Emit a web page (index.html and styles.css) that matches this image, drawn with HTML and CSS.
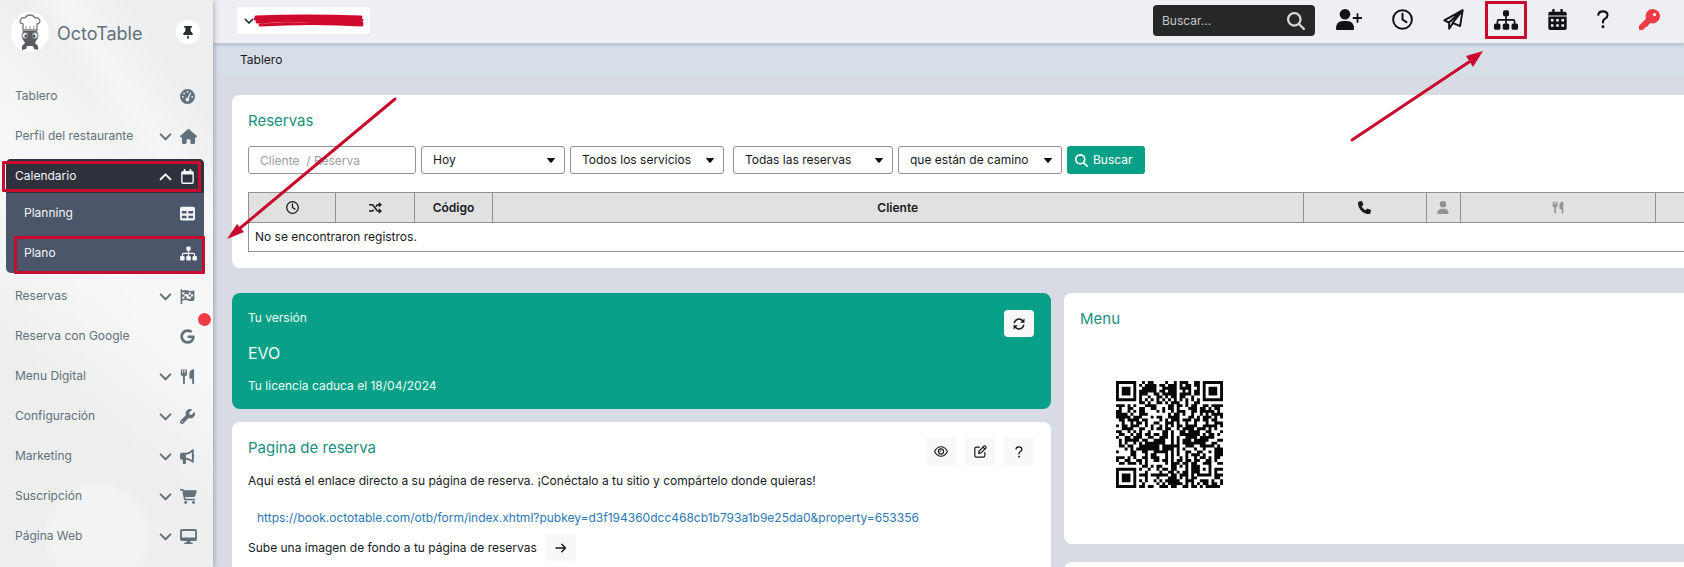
FILE: index.html
```
<!DOCTYPE html>
<html lang="es">
<head>
  <meta charset="UTF-8" />
  <meta name="viewport" content="width=device-width, initial-scale=1.0" />
  <title>OctoTable - Tablero</title>
  <link rel="stylesheet" href="styles.css">
</head>
<body>
  <svg class="sprite" aria-hidden="true">
    <symbol id="i-down" viewBox="0 0 24 24"><path d="M3 8l9 9 9-9" fill="none" stroke="currentColor" stroke-width="3.6" stroke-linecap="round" stroke-linejoin="round"/></symbol>
    <symbol id="i-up" viewBox="0 0 24 24"><path d="M3 17l9-9 9 9" fill="none" stroke="currentColor" stroke-width="3.6" stroke-linecap="round" stroke-linejoin="round"/></symbol>
    <symbol id="i-pin" viewBox="0 0 384 512"><path d="M32 32C32 14.3 46.3 0 64 0H320c17.7 0 32 14.3 32 32s-14.3 32-32 32H290.5l11.4 148.2c36.7 19.9 65.7 53.2 79.5 94.7l1 3c3.3 9.8 1.6 20.5-4.4 28.8s-15.7 13.3-26 13.3H32c-10.3 0-19.9-4.9-26-13.3s-7.7-19.1-4.4-28.8l1-3c13.8-41.5 42.8-74.8 79.5-94.7L93.5 64H64C46.3 64 32 49.7 32 32zM160 384h64v96c0 17.7-14.3 32-32 32s-32-14.3-32-32V384z"/></symbol>
    <symbol id="i-gauge" viewBox="0 0 24 24"><path fill-rule="evenodd" d="M12 0a12 12 0 1 1 0 24a12 12 0 0 1 0-24zM12 3a1.500 1.500 0 1 0 0 3a1.500 1.500 0 0 0 0-3zM6.500 5.500a1.500 1.500 0 1 0 0 3a1.500 1.500 0 0 0 0-3zM4.500 11a1.500 1.500 0 1 0 0 3a1.500 1.500 0 0 0 0-3zM19.500 11a1.500 1.500 0 1 0 0 3a1.500 1.500 0 0 0 0-3zM16.200 5.500l-4 8.300a3 3 0 1 0 1.900 .900l3.900-8.200z"/></symbol>
    <symbol id="i-home" viewBox="0 0 576 512"><path d="M575.8 255.5c0 18-15 32.1-32 32.1h-32l.7 160.2c0 2.700-.2 5.400-.5 8.100V472c0 22.100-17.900 40-40 40H392c-22.100 0-40-17.900-40-40V384c0-17.700-14.300-32-32-32H256c-17.700 0-32 14.300-32 32v88c0 22.100-17.900 40-40 40H104c-22.100 0-40-17.900-40-40V287.600H32c-18 0-32-14-32-32.100c0-9 3-17 10-24L266.400 8c7-7 15-8 22-8s15 2 21 7L564.800 231.500c8 7 12 15 11 24z"/></symbol>
    <symbol id="i-cal" viewBox="0 0 24 26"><path fill-rule="evenodd" d="M5.500 0h3v3.500h7V0h3v3.500H20a3 3 0 0 1 3 3V23a3 3 0 0 1-3 3H4a3 3 0 0 1-3-3V6.500a3 3 0 0 1 3-3h1.500zM3.500 9.500V23.500h17V9.500z"/></symbol>
    <symbol id="i-table" viewBox="0 0 24 22"><path fill-rule="evenodd" d="M3 0h18a3 3 0 0 1 3 3v16a3 3 0 0 1-3 3H3a3 3 0 0 1-3-3V3a3 3 0 0 1 3-3zM3 7v4h7.500V7zM13.500 7v4H21V7zM3 14.500v4h7.500v-4zM13.500 14.500v4H21v-4z"/></symbol>
    <symbol id="i-sitemap" viewBox="0 0 28 23"><rect x="10.500" y="0" width="7" height="7" rx="1.800"/><rect x="0" y="15.500" width="7.500" height="7.500" rx="2"/><rect x="10.250" y="15.500" width="7.500" height="7.500" rx="2"/><rect x="20.500" y="15.500" width="7.500" height="7.500" rx="2"/><path d="M14 6v10M4 16v-3q0-1.700 1.700-1.700h16.600q1.700 0 1.700 1.700v3" fill="none" stroke="currentColor" stroke-width="2"/></symbol>
    <symbol id="i-flag" viewBox="0 0 24 24"><path fill-rule="evenodd" d="M1 1q1.300-2 2.600 0v1.500q5-2 9.400 0t10-.5V18q-5 2.500-10 .5t-9.400 0V24H1zM7 4.500l-3.400 1V9L7 8.300v3.500l3.500-.4V7.900L7 8.300zM14 5v3.600l-3.500-.7v3.500l3.500 .700v3.400l3.500 .300v-3.500L14 12.100V8.600l3.500 .300V5.600zM17.500 8.900v3.400l3.500-.6V8.200zM3.600 12.500V16L7 15.300v-3.500zM10.500 11.400v3.700L14 15.500v-3.400z"/></symbol>
    <symbol id="i-google" viewBox="0 0 488 512"><path d="M488 261.800C488 403.300 391.100 504 248 504 110.800 504 0 393.200 0 256S110.800 8 248 8c66.800 0 123 24.500 166.300 64.900l-67.500 64.900C258.500 52.600 94.300 116.600 94.300 256c0 86.500 69.100 156.600 153.700 156.600 98.200 0 135-70.400 140.800-106.900H248v-85.300h236.100c2.300 12.700 3.900 24.900 3.900 41.400z"/></symbol>
    <symbol id="i-fork" viewBox="0 0 24 24"><path d="M2 0q1-.6 1.500 0L4 7h.8L5.300 .3q.9-.6 1.700 0L7.500 7h.8L9 0q.6-.6 1.500 0l1 7.500q0 3.500-3.700 4.500v11q-1.500 2-3 0V12Q1 11 1 7.500zM22.500 0v23q-1.500 2-3 0v-7.500h-2.300q-2.200 0-2.200-2.500V7.500Q15.500 1 22.500 0z"/></symbol>
    <symbol id="i-wrench" viewBox="0 0 512 512"><path d="M352 320c88.400 0 160-71.600 160-160c0-15.300-2.200-30.100-6.200-44.200c-3.100-10.800-16.400-13.200-24.300-5.300l-76.800 76.800c-3 3-7.100 4.700-11.300 4.700H336c-8.800 0-16-7.200-16-16V118.600c0-4.200 1.700-8.300 4.700-11.300l76.800-76.800c7.900-7.900 5.400-21.200-5.300-24.300C382.100 2.200 367.300 0 352 0C263.600 0 192 71.600 192 160c0 19.100 3.400 37.500 9.500 54.500L19.900 396.100C7.200 408.800 0 426.100 0 444.100C0 481.600 30.400 512 67.900 512c18 0 35.300-7.200 48-19.900L297.500 310.500c17 6.200 35.400 9.500 54.500 9.500zM80 408a24 24 0 1 1 0 48 24 24 0 1 1 0-48z"/></symbol>
    <symbol id="i-horn" viewBox="0 0 24 24"><path fill-rule="evenodd" d="M22 1v8q2 1.500 0 4v8q-1 1.500-2.500 .500Q15 17.500 9.500 17v5.500q0 1.500-1.500 1.500H6q-1.500 0-1.500-1.500V17H3q-3 0-3-3V9q0-3 3-3h6q6 0 10.500-5.500Q21 0 22 1zM19 5Q15 8.500 9.500 9v5q5.500 .500 9.500 3.500z"/></symbol>
    <symbol id="i-cart" viewBox="0 0 27 24"><path d="M0 0h4.500q1 0 1.300 1.200L6 2h21l-2.700 9q-.5 1.800-2.300 1.800H8.200l.5 2.700H24V18H7.500q-1 0-1.300-1.200L3.600 2.500H0z"/><circle cx="9" cy="21.500" r="2.300"/><circle cx="21.500" cy="21.500" r="2.300"/></symbol>
    <symbol id="i-screen" viewBox="0 0 27 24"><path fill-rule="evenodd" d="M3 0h21a3 3 0 0 1 3 3v13a3 3 0 0 1-3 3h-8l.8 2.500h3q1.500 1.200 0 2.500H7.200q-1.500-1.200 0-2.500h3L11 19H3a3 3 0 0 1-3-3V3a3 3 0 0 1 3-3zM3 3v10.500h21V3z"/></symbol>
    <symbol id="i-search" viewBox="0 0 512 512"><path d="M416 208c0 45.900-14.900 88.300-40 122.700L502.600 457.400c12.500 12.500 12.500 32.800 0 45.300s-32.800 12.500-45.300 0L330.700 376c-34.400 25.200-76.800 40-122.700 40C93.100 416 0 322.900 0 208S93.100 0 208 0S416 93.100 416 208zM208 352a144 144 0 1 0 0-288 144 144 0 1 0 0 288z"/></symbol>
    <symbol id="i-user" viewBox="0 0 448 512"><path d="M224 256A128 128 0 1 0 224 0a128 128 0 1 0 0 256zm-45.700 48C79.800 304 0 383.800 0 482.300C0 498.700 13.300 512 29.700 512H418.300c16.400 0 29.700-13.300 29.700-29.700C448 383.800 368.200 304 269.700 304H178.300z"/></symbol>
    <symbol id="i-useradd" viewBox="0 0 26 21"><circle cx="9" cy="5.300" r="5.300"/><path d="M0 20q0-8 7-8h4q7 0 7 8 0 1-1 1H1q-1 0-1-1z"/><path d="M17.500 9h8M21.500 5v8" stroke="currentColor" stroke-width="1.800" stroke-linecap="round"/></symbol>
    <symbol id="i-clock" viewBox="0 0 24 24"><circle cx="12" cy="12" r="10.700" fill="none" stroke="currentColor" stroke-width="2.300"/><path d="M12 5.500V12l4.500 3" fill="none" stroke="currentColor" stroke-width="2.300" stroke-linecap="round" stroke-linejoin="round"/></symbol>
    <symbol id="i-plane" viewBox="0 0 24 24"><path d="M22.500 1.200L1.500 13l5.300 2.500L22.500 1.200 19.500 19.500l-8.500-3.700L22.500 1.200M7 15.500v7l4-6" fill="none" stroke="currentColor" stroke-width="2.200" stroke-linejoin="round"/></symbol>
    <symbol id="i-days" viewBox="0 0 21 24"><path fill-rule="evenodd" d="M4.500 0h2.700v3h6.600V0h2.700v3H19a2 2 0 0 1 2 2v2.300H0V5a2 2 0 0 1 2-2h2.500zM0 8.700h21V22a2 2 0 0 1-2 2H2a2 2 0 0 1-2-2zM3 11.500v2.700h3v-2.700zM9 11.500v2.700h3v-2.700zM15 11.500v2.700h3v-2.700zM3 17.500v2.700h3v-2.700zM9 17.500v2.700h3v-2.700zM15 17.500v2.700h3v-2.700z"/></symbol>
    <symbol id="i-help" viewBox="0 0 14 22"><path d="M1.500 5.500Q2 1.500 7 1.500t5.300 4.300Q12.300 8.500 9.500 10T7 14.500" fill="none" stroke="currentColor" stroke-width="2.400" stroke-linecap="round"/><circle cx="7" cy="19.500" r="1.700"/></symbol>
    <symbol id="i-key" viewBox="0 0 24 24"><path fill-rule="evenodd" d="M15.800 0a8.200 8.200 0 1 1-2.500 16L11 18l-1.500 2-2 .800L5 23.500q-1 .8-2 .5H1q-1 0-1-1v-4L8 11A8.200 8.200 0 0 1 15.800 0zM17.800 4.500a1.900 1.900 0 1 0 0 3.800a1.900 1.900 0 0 0 0-3.800z"/></symbol>
    <symbol id="i-shuffle" viewBox="0 0 24 22"><path d="M1 5h4.500q1.500 0 2.500 1.300l6 8.400Q15 16.500 16.500 16.500H19M1 16.500h4.500q1.500 0 2.500-1.300M13.500 7.500l.8-1.200Q15.200 5 16.500 5H19" fill="none" stroke="currentColor" stroke-width="2.800" stroke-linecap="round"/><path d="M18 0l6 5-6 5zM18 11.500l6 5-6 5z"/></symbol>
    <symbol id="i-phone" viewBox="0 0 512 512"><path d="M164.900 24.600c-7.700-18.600-28-28.500-47.400-23.200l-88 24C12.100 30.200 0 46 0 64C0 311.400 200.600 512 448 512c18 0 33.800-12.100 38.600-29.500l24-88c5.300-19.400-4.600-39.700-23.200-47.400l-96-40c-16.300-6.800-35.200-2.100-46.300 11.600L304.700 368C234.300 334.700 177.300 277.700 144 207.300L193.300 167c13.700-11.200 18.400-30 11.600-46.300l-40-96z"/></symbol>
    <symbol id="i-sync" viewBox="0 0 24 24"><path d="M2.500 10.500A9.500 9.500 0 0 1 19.500 6M21.500 13.500A9.500 9.500 0 0 1 4.500 18" fill="none" stroke="currentColor" stroke-width="3"/><path d="M23 1v8.500h-8.500zM1 23v-8.500h8.500z"/></symbol>
    <symbol id="i-eye" viewBox="0 0 28 22"><path d="M1.200 11Q6 1.500 14 1.500T26.800 11Q22 20.500 14 20.500T1.200 11z" fill="none" stroke="currentColor" stroke-width="2.200"/><circle cx="14" cy="11" r="5.200" fill="none" stroke="currentColor" stroke-width="2.200"/><path d="M11 11.500q3 0 3-3" fill="none" stroke="currentColor" stroke-width="2"/></symbol>
    <symbol id="i-edit" viewBox="0 0 24 24"><path d="M10 4H4.500Q1.500 4 1.500 7v12.500q0 3 3 3H17q3 0 3-3V14M8.500 15.500l1-4.500 9-9q1.500-1 3 .500t.500 3l-9 9zM16.500 4l3.500 3.500" fill="none" stroke="currentColor" stroke-width="2.200" stroke-linecap="round" stroke-linejoin="round"/></symbol>
    <symbol id="i-arrow" viewBox="0 0 24 20"><path d="M2 10h19M13.500 2.500L21 10l-7.500 7.500" fill="none" stroke="currentColor" stroke-width="3" stroke-linecap="round" stroke-linejoin="round"/></symbol>
  </svg>

  <aside class="sidebar">
    <div class="brand">
      <a href="#" class="logo" aria-label="OctoTable">
        <svg viewBox="0 0 22 36" width="22" height="36">
          <path d="M4 16V10Q0 9 1.500 5.500 3 3 6 4q1.500-3 5-3t5 3q3-1 4.500 1.500Q22 9 18 10v6z" fill="#fff" stroke="#74797d" stroke-width="1.300"/>
          <path d="M7 12v3M11 12v3M15 12v3" stroke="#999" stroke-width="1"/>
          <path d="M4 17h14l1 3q1 4-2 7l-1 2 3 3v4l-4-1-1-3h-6l-1 3-4 1v-4l3-3-1-2q-3-3-2-7z" fill="#5a5e62"/>
          <circle cx="6" cy="21.500" r="3" fill="#eee" stroke="#74797d"/><circle cx="16" cy="21.500" r="3" fill="#eee" stroke="#74797d"/>
          <circle cx="7" cy="22" r="1.500" fill="#4c5054"/><circle cx="15" cy="22" r="1.500" fill="#4c5054"/>
        </svg>
      </a>
      <span class="brand-name">OctoTable</span>
      <button class="pin" aria-label="Fijar menú"><svg width="10" height="13"><use href="#i-pin"/></svg></button>
    </div>

    <nav class="menu">
      <a href="#" class="item"><span>Tablero</span><svg class="icon"><use href="#i-gauge"/></svg></a>
      <a href="#" class="item"><span>Perfil del restaurante</span><svg class="chev"><use href="#i-down"/></svg><svg class="icon wide"><use href="#i-home"/></svg></a>
      <div class="group">
        <a href="#" class="item active"><span>Calendario</span><svg class="chev"><use href="#i-up"/></svg><svg class="icon"><use href="#i-cal"/></svg></a>
        <a href="#" class="item sub"><span>Planning</span><svg class="icon"><use href="#i-table"/></svg></a>
        <a href="#" class="item sub"><span>Plano</span><svg class="icon wide"><use href="#i-sitemap"/></svg></a>
        <div class="mark mark-calendar"></div>
        <div class="mark mark-plan"></div>
      </div>
      <a href="#" class="item"><span>Reservas</span><svg class="chev"><use href="#i-down"/></svg><svg class="icon"><use href="#i-flag"/></svg></a>
      <a href="#" class="item"><span>Reserva con Google</span><svg class="icon"><use href="#i-google"/></svg><i class="dot"></i></a>
      <a href="#" class="item"><span>Menu Digital</span><svg class="chev"><use href="#i-down"/></svg><svg class="icon"><use href="#i-fork"/></svg></a>
      <a href="#" class="item"><span>Configuración</span><svg class="chev"><use href="#i-down"/></svg><svg class="icon"><use href="#i-wrench"/></svg></a>
      <a href="#" class="item"><span>Marketing</span><svg class="chev"><use href="#i-down"/></svg><svg class="icon"><use href="#i-horn"/></svg></a>
      <a href="#" class="item"><span>Suscripción</span><svg class="chev"><use href="#i-down"/></svg><svg class="icon wide"><use href="#i-cart"/></svg></a>
      <a href="#" class="item"><span>Página Web</span><svg class="chev"><use href="#i-down"/></svg><svg class="icon wide"><use href="#i-screen"/></svg></a>
    </nav>
  </aside>

  <main class="main">
    <header class="topbar">
      <button class="account" aria-label="Cuenta">
        <svg width="10" height="10"><use href="#i-down"/></svg>
        <svg class="scribble" width="110" height="14" viewBox="0 0 110 14"><path d="M2 3Q50 1 107 3M1 5Q60 3 108 6M3 8Q50 5 108 9M6 11Q60 8 108 11" fill="none" stroke="#cf0a2c" stroke-width="3" stroke-linecap="round"/></svg>
      </button>
      <form class="search">
        <input type="text" placeholder="Buscar..." aria-label="Buscar">
        <button type="button" aria-label="Buscar"><svg width="18" height="18"><use href="#i-search"/></svg></button>
      </form>
      <div class="tools">
        <button aria-label="Nuevo cliente"><svg width="26" height="21"><use href="#i-useradd"/></svg></button>
        <button aria-label="Horario"><svg width="21" height="21"><use href="#i-clock"/></svg></button>
        <button aria-label="Enviar"><svg width="21" height="21"><use href="#i-plane"/></svg></button>
        <button aria-label="Plano" class="marked"><svg width="24" height="20"><use href="#i-sitemap"/></svg></button>
        <button aria-label="Calendario"><svg width="19" height="21"><use href="#i-days"/></svg></button>
        <button aria-label="Ayuda"><svg width="12" height="19"><use href="#i-help"/></svg></button>
        <button aria-label="Clave" class="key"><svg width="21" height="21"><use href="#i-key"/></svg></button>
      </div>
    </header>
    <div class="breadcrumb">Tablero</div>

    <div class="content">
      <section class="card bookings">
        <h2>Reservas</h2>
        <form class="filters">
          <input type="text" class="field w-client" placeholder="Cliente  / Reserva" aria-label="Cliente / Reserva">
          <select class="field w-day" aria-label="Fecha"><option>Hoy</option></select>
          <select class="field w-service" aria-label="Servicio"><option>Todos los servicios</option></select>
          <select class="field w-type" aria-label="Tipo"><option>Todas las reservas</option></select>
          <select class="field w-state" aria-label="Estado"><option>que están de camino</option></select>
          <button type="button" class="btn-search"><svg width="13" height="13"><use href="#i-search"/></svg>Buscar</button>
        </form>
        <table class="grid">
          <colgroup>
            <col class="c-time"><col class="c-mix"><col class="c-code"><col><col class="c-phone"><col class="c-pax"><col class="c-room"><col class="c-more">
          </colgroup>
          <thead>
            <tr>
              <th><svg width="13" height="13"><use href="#i-clock"/></svg></th>
              <th><svg width="13" height="12"><use href="#i-shuffle"/></svg></th>
              <th>Código</th>
              <th>Cliente</th>
              <th><svg width="13" height="13"><use href="#i-phone"/></svg></th>
              <th class="dim"><svg width="12" height="13"><use href="#i-user"/></svg></th>
              <th class="dim"><svg width="12" height="13"><use href="#i-fork"/></svg></th>
              <th></th>
            </tr>
          </thead>
          <tbody>
            <tr><td colspan="8">No se encontraron registros.</td></tr>
          </tbody>
        </table>
      </section>

      <div class="columns">
        <div class="col">
          <section class="card version">
            <div>
              <p>Tu versión</p>
              <p class="plan">EVO</p>
              <p>Tu licencia caduca el 18/04/2024</p>
            </div>
            <button class="btn-icon" aria-label="Actualizar"><svg width="12" height="12"><use href="#i-sync"/></svg></button>
          </section>
          <section class="card page">
            <div class="card-head">
              <h2>Pagina de reserva</h2>
              <div class="actions">
                <button class="btn-icon" aria-label="Ver"><svg width="14" height="11"><use href="#i-eye"/></svg></button>
                <button class="btn-icon" aria-label="Editar"><svg width="13" height="13"><use href="#i-edit"/></svg></button>
                <button class="btn-icon" aria-label="Ayuda"><svg width="8" height="12"><use href="#i-help"/></svg></button>
              </div>
            </div>
            <p>Aquí está el enlace directo a su página de reserva. ¡Conéctalo a tu sitio y compártelo donde quieras!</p>
            <a href="#" class="link">https://book.octotable.com/otb/form/index.xhtml?pubkey=d3f194360dcc468cb1b793a1b9e25da0&amp;property=653356</a>
            <div class="upload">Sube una imagen de fondo a tu página de reservas <button class="btn-icon" aria-label="Subir"><svg width="12" height="10"><use href="#i-arrow"/></svg></button></div>
          </section>
        </div>
        <div class="col side">
          <section class="card qr-card">
            <h2>Menu</h2>
            <svg id="qr" class="qr" viewBox="0 0 37 37" role="img" aria-label="Código QR"></svg>
          </section>
          <section class="card next"></section>
        </div>
      </div>
    </div>
  </main>

  <svg class="arrow arrow-left" viewBox="0 0 172 146" aria-hidden="true"><path d="M168 2L12 132" stroke="#c70a2d" stroke-width="3" stroke-linecap="round"/><path d="M0 142L10 127 17 135z"/></svg>
  <svg class="arrow arrow-right" viewBox="0 0 136 94" aria-hidden="true"><path d="M3 90L120 12" stroke="#c70a2d" stroke-width="3" stroke-linecap="round"/><path d="M134 1L117 6 124 17z"/></svg>

  <script src="script.js"></script>
</body>
</html>
```
FILE: styles.css
```
* {
  box-sizing: border-box;
}

body {
  margin: 0;
  height: 100vh;
  display: flex;
  overflow: hidden;
  position: relative;
  background: #d8dbe3;
  color: #17191c;
  font-family: Inter, "Liberation Sans", sans-serif;
  font-size: 12px;
  line-height: 16px;
}

svg {
  fill: currentColor;
  display: block;
  flex: none;
}

.sprite {
  position: absolute;
  width: 0;
  height: 0;
}

a {
  color: inherit;
  text-decoration: none;
}

button, input, select {
  font: inherit;
  color: inherit;
  margin: 0;
}

button {
  border: none;
  background: none;
  padding: 0;
  display: flex;
  align-items: center;
  justify-content: center;
  cursor: pointer;
}

h2 {
  margin: 0;
  font-size: 15px;
  line-height: 20px;
  font-weight: 400;
  color: #1a9080;
}

p {
  margin: 0;
}

/* sidebar */

.sidebar {
  width: 213px;
  flex: none;
  z-index: 2;
  color: #62717b;
  background:
    radial-gradient(circle at 98px 535px, rgba(255, 255, 255, 0.3) 46px, transparent 56px),
    linear-gradient(40deg, transparent 30%, rgba(255, 255, 255, 0.6) 52%, rgba(255, 255, 255, 0.4) 66%, transparent 78%),
    linear-gradient(55deg, transparent 68%, rgba(255, 255, 255, 0.4) 75%, transparent 86%),
    #eeeeef;
  box-shadow: 1px 0 5px rgba(60, 75, 95, 0.4);
}

.brand {
  height: 76px;
  padding: 12px 13px 0 11px;
  display: flex;
  align-items: flex-start;
}

.logo {
  width: 38px;
  height: 40px;
  border-radius: 50%;
  background: #fff;
  display: flex;
  align-items: center;
  justify-content: center;
}

.brand-name {
  flex: 1;
  padding: 10px 0 0 8px;
  font-size: 18px;
  line-height: 24px;
}

.pin {
  width: 24px;
  height: 24px;
  margin-top: 8px;
  border-radius: 50%;
  background: #fff;
  color: #292e33;
}

.item {
  height: 40px;
  padding: 0 16px 0 15px;
  display: flex;
  align-items: center;
  position: relative;
}

.item span {
  flex: 1;
}

.chev {
  width: 13px;
  height: 13px;
  margin-right: 8px;
}

.icon {
  width: 15px;
  height: 15px;
  margin-right: 2px;
}

.icon.wide {
  width: 17px;
  margin-right: 0;
}

.group {
  margin: 3px 9px 3px 6px;
  position: relative;
  border-radius: 5px;
  background: #4b566a;
  color: #f4f5f7;
}

.group .item {
  padding: 0 7px 0 18px;
}

.group .item.active {
  height: 34px;
  padding-left: 9px;
  background: #2f323d;
  border-radius: 5px 5px 0 0;
}

.mark {
  position: absolute;
  border: 3px solid #c70a2d;
  border-radius: 1px;
  pointer-events: none;
}

.mark-calendar {
  inset: 2px 3px 81px -4px;
}

.mark-plan {
  inset: 77px -1px -1px 8px;
}

.dot {
  position: absolute;
  top: -3px;
  right: 2px;
  width: 13px;
  height: 13px;
  border-radius: 50%;
  background: #ee3b45;
}

/* top bar */

.main {
  flex: 1;
  min-width: 0;
}

.topbar {
  height: 44px;
  padding: 0 24px;
  display: flex;
  align-items: center;
  background: #eeeff3;
  border-bottom: 1px solid #c3c9d1;
  box-shadow: 0 1px 3px rgba(60, 75, 95, 0.25);
  position: relative;
}

.account {
  width: 133px;
  height: 27px;
  margin: 0 auto 2px 0;
  border-radius: 4px;
  background: #fff;
}

.search {
  width: 162px;
  height: 31px;
  margin: 0 21px 2px 0;
  padding: 0 10px 0 9px;
  display: flex;
  align-items: center;
  border-radius: 4px;
  background: #252827;
  color: #d5d7d7;
}

.search input {
  flex: 1;
  min-width: 0;
  border: none;
  padding: 0;
  background: none;
  outline: none;
}

.search input::placeholder {
  color: #c5c8c8;
}

.tools {
  display: flex;
  align-items: center;
  gap: 30px;
  height: 38px;
  margin-bottom: 4px;
  color: #101214;
}

.tools button {
  position: relative;
}

.marked::after {
  content: "";
  position: absolute;
  inset: -9px;
  border: 3px solid #c70a2d;
}

.tools .key {
  color: #ee3b45;
}

.breadcrumb {
  height: 33px;
  padding: 0 27px;
  line-height: 32px;
  background: #d6dee8;
}

/* cards */

.content {
  padding: 18px 0 0 19px;
}

.card {
  padding: 16px;
  border-radius: 8px;
  background: #fff;
}

.bookings {
  padding-right: 0;
  border-radius: 8px 0 0 8px;
}

.filters {
  display: flex;
  margin: 15px 0 18px;
}

.field {
  height: 28px;
  padding: 0 11px;
  margin-right: 5px;
  border: 1px solid #8f9295;
  border-radius: 3px;
  background: #fff;
  appearance: none;
}

.field::placeholder {
  color: #9ba0a3;
}

select.field {
  background: url("data:image/svg+xml,%3Csvg xmlns='http://www.w3.org/2000/svg' viewBox='0 0 8 5'%3E%3Cpath d='M0 .5Q0 0 .5 0h7Q8 0 8 .5L4.500 4.700Q4 5 3.500 4.700z' fill='%23101214'/%3E%3C/svg%3E") no-repeat right 9px center / 8px 5px;
}

.w-client { width: 168px; }
.w-day { width: 144px; }
.w-service { width: 154px; margin-right: 9px; }
.w-type { width: 160px; }
.w-state { width: 164px; }

.btn-search {
  height: 28px;
  padding: 0 12px 0 8px;
  gap: 5px;
  border-radius: 3px;
  background: #08a188;
  color: #fff;
}

.grid {
  width: 100%;
  table-layout: fixed;
  border-collapse: collapse;
}

.grid th, .grid td {
  padding: 0 6px;
  border: 1px solid #8f9295;
}

.grid th {
  height: 30px;
  background: #e1e1e1;
  font-weight: 600;
}

.grid td {
  height: 29px;
}

.grid tr > :last-child {
  border-right: none;
}

.grid th svg {
  margin: 0 auto;
}

.grid .dim {
  color: #919294;
}

.c-time { width: 87px; }
.c-mix { width: 79px; }
.c-code { width: 78px; }
.c-phone { width: 123px; }
.c-pax { width: 34px; }
.c-room { width: 195px; }
.c-more { width: 29px; }

.columns {
  margin-top: 25px;
  display: grid;
  grid-template-columns: 819fr 620fr;
  gap: 13px;
}

.col {
  display: flex;
  flex-direction: column;
  gap: 13px;
}

.side {
  gap: 18px;
}

.version {
  display: flex;
  justify-content: space-between;
  padding: 16px 17px 14px 16px;
  background: #08a188;
  color: #eefaf7;
}

.version p {
  line-height: 18px;
}

.version .plan {
  margin: 16px 0 14px;
  font-size: 16px;
  line-height: 20px;
}

.btn-icon {
  width: 30px;
  height: 27px;
  border-radius: 2px;
  background: #f8f8f8;
}

.version .btn-icon {
  margin-top: 1px;
  border-radius: 4px;
  color: #17191c;
}

.page {
  padding-right: 17px;
}

.card-head {
  display: flex;
  justify-content: space-between;
}

.actions {
  display: flex;
  gap: 9px;
}

.page p {
  margin-top: 8px;
}

.link {
  display: block;
  margin: 21px 9px 8px;
  color: #2b78b4;
}

.upload {
  display: flex;
  align-items: center;
  gap: 9px;
}

.qr-card {
  height: 251px;
  border-radius: 8px 0 0 8px;
}

.qr {
  width: 107px;
  margin: 52px 0 0 36px;
}

.next {
  height: 100px;
  border-radius: 8px 0 0 8px;
}

/* pointer arrows */

.arrow {
  position: absolute;
  z-index: 3;
  fill: #c70a2d;
  pointer-events: none;
}

.arrow-left {
  left: 227px;
  top: 97px;
  width: 172px;
}

.arrow-right {
  right: 199px;
  top: 50px;
  width: 136px;
}
```
FILE: script.js
```
const modules = [
  '#######..#.##....#..#.###..##.#######',
  '#.....#.#.####.##.###.#.##.##.#.....#',
  '#.###.#..#####..#####.####..#.#.###.#',
  '#.###.#.######.##.###..#.#.##.#.###.#',
  '#.###.#.###..##.#####.####.##.#.###.#',
  '#.....#.#..#..##.#.##.##..#...#.....#',
  '#######.#.#.#.#.#.#.#.#.#.#.#.#######',
  '........##.#..##.#.###..#..##........',
  '###.#.#...####....##.##.#.##..##.####',
  '.#..##..##..##..#.##.#...###.##.#.##.',
  '##..#.#.##....#.#..#.###..##.#####.#.',
  '####.#..###.......#.##.#..#..#.#.####',
  '#####.###...#.##..####...##.#.###.#.#',
  '.##.####.##....#.#.###.###.##.##.##..',
  '..#..#.##.#..##..###.#..#..#...#..###',
  '#.##.###..#.#..#.#.#.##.####..#####.#',
  '..####..##..#.##.##..#.####.###.#.#..',
  '##..#.#.#..#....##.#..##.####..##...#',
  '.##..#.##.##.##.##.#..#######.#.##.#.',
  '#..##.###..##..###.#.#..####.#####...',
  '.#.#####.##..####..#.#.###.#####...##',
  '.#.#..#.#.#######..#.#.########..##..',
  '.##.##..#######.######..###..#####.#.',
  '...#.#.########.####.#.#...#..#...###',
  '#....##..##..#####.#.#..##..##..#.###',
  '.....##...#.##...#.#.#..#.###.#...###',
  '###.#.#..##.###..#.#..#.#..#.##.#.##.',
  '#..##..##.#..##.##.#.##.##.##..##.#..',
  '.##.###.#.#......#.###.##.##..###..##',
  '.........##.#.##...##.#.#.###...#....',
  '#######.#..#..#.##.##...#.###.#.#.###',
  '#.....#...#....#..##.#.##.###...#.#..',
  '#.###.#.###.######.##.###.#.#####.###',
  '#.###.#...#...#...###.#.#.##......##.',
  '#.###.#.#.#..#.#.#####..###..###.#..#',
  '#.....#..#....#.#.#####.#.#.#.##.##.#',
  '#######.##.##..###.##..##.##.#.#####.'
];

const draw = modules.map((row, y) =>
  [...row].map((cell, x) => cell === '#' ? `M${x} ${y}h1v1h-1z` : '').join('')
).join('');

document.getElementById('qr').innerHTML = `<path d="${draw}" fill="#080808"/>`;
```
